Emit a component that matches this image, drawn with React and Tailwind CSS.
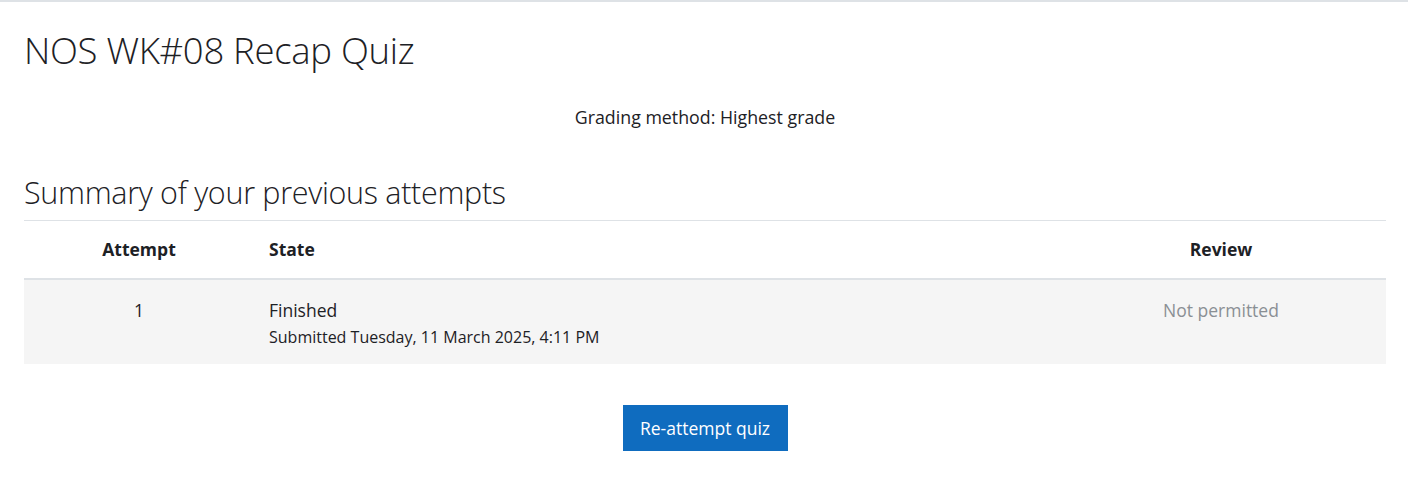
export default function App() {
  return (
    <div className="w-[1408px] h-[488px] bg-white border-t-2 border-[#dee2e6] text-[#1d2125] font-['Open_Sans','Noto_Sans',sans-serif]">
      <div className="pl-6 pr-[22px]">
        <h1 className="pt-[24px] text-[36.5px] leading-[48px] font-light tracking-[-0.3px]">NOS WK#08 Recap Quiz</h1>
        <p className="mt-[30px] text-center text-[17.8px] leading-[26px]">Grading method: Highest grade</p>
        <h2 className="mt-[42px] text-[30.5px] leading-[40px] font-light tracking-[-0.3px] pb-[8px] border-b border-[#dee2e6]">Summary of your previous attempts</h2>
        <table className="w-full border-collapse text-[17.5px] table-fixed">
          <thead>
            <tr className="border-b-2 border-[#dee2e6]">
              <th className="w-[230px] h-[58px] font-bold text-center align-middle">Attempt</th>
              <th className="text-left pl-[15px] pr-3 font-bold align-middle">State</th>
              <th className="w-[330px] font-bold text-center align-middle">Review</th>
            </tr>
          </thead>
          <tbody>
            <tr className="bg-[#f5f5f5]">
              <td className="h-[85px] text-center align-top pt-[18px] leading-[24px]">1</td>
              <td className="pl-[15px] pr-3 align-top pt-[18px]">
                <div className="leading-[24px]">Finished</div>
                <div className="text-[16px] leading-[22px] mt-[4px]">Submitted Tuesday, 11 March 2025, 4:11 PM</div>
              </td>
              <td className="text-center align-top pt-[18px] text-[#8a8f94] leading-[24px]">Not permitted</td>
            </tr>
          </tbody>
        </table>
        <div className="flex justify-center mt-[41px]">
          <button className="bg-[#0f6cbf] text-white text-[17.5px] w-[165px] h-[46px]">Re-attempt quiz</button>
        </div>
      </div>
    </div>
  );
}
